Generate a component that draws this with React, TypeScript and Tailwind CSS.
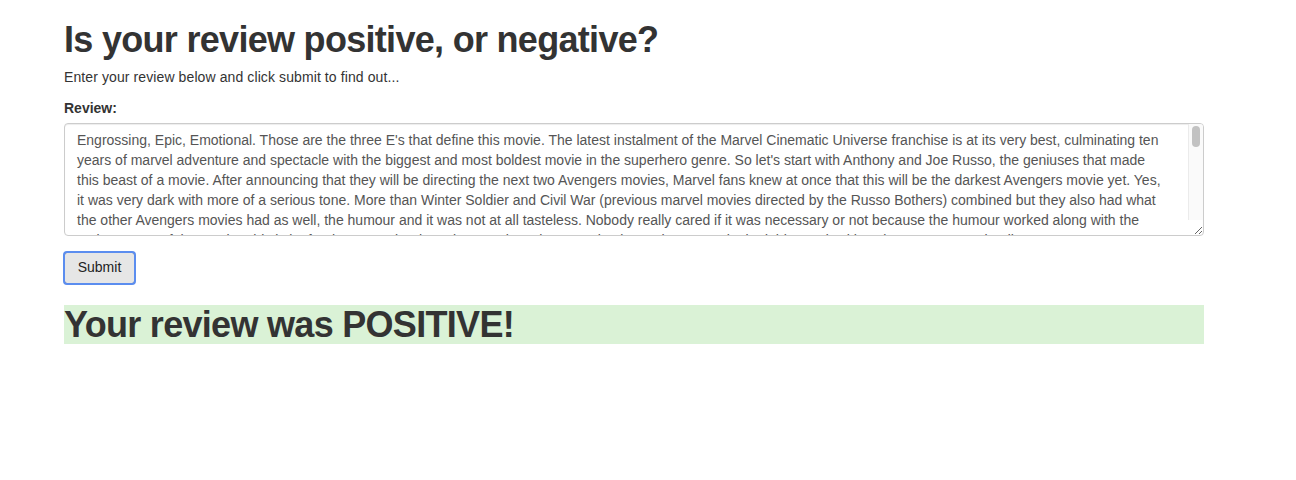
import React from "react";

const REVIEW = [
  "Engrossing, Epic, Emotional. Those are the three E's that define this movie. The latest instalment of the Marvel Cinematic Universe franchise is at its very best, culminating ten",
  "years of marvel adventure and spectacle with the biggest and most boldest movie in the superhero genre. So let's start with Anthony and Joe Russo, the geniuses that made",
  "this beast of a movie. After announcing that they will be directing the next two Avengers movies, Marvel fans knew at once that this will be the darkest Avengers movie yet. Yes,",
  "it was very dark with more of a serious tone. More than Winter Soldier and Civil War (previous marvel movies directed by the Russo Bothers) combined but they also had what",
  "the other Avengers movies had as well, the humour and it was not at all tasteless. Nobody really cared if it was necessary or not because the humour worked along with the",
  "serious parts of the movie. This is by far the Russo brothers' best work as the Marvel universe has never looked this good, with Robert Downey Jr. leading",
  "the cast once again, and every single hero getting a moment to shine. The action sequences are breathtaking and the stakes have never been higher.",
  "Thanos is the best villain Marvel has ever produced, a character with real motivation and depth. Josh Brolin delivers a performance that is both menacing",
  "and sympathetic, and the ending will leave you speechless.",
].join("\n");

export default function App() {
  return (
    <div
      className="min-h-[480px] bg-white text-[#333333]"
      style={{ fontFamily: '"Liberation Sans", Arial, sans-serif' }}
    >
      <div className="w-[1140px] ml-[64px]">
        <h1 className="mt-[20px] mb-[7px] text-[36px] leading-[39.6px] font-bold tracking-[-0.7px]">
          Is your review positive, or negative?
        </h1>
        <p className="text-[14px] leading-[20px] mb-[11px] tracking-[0.1px]">
          Enter your review below and click submit to find out...
        </p>
        <form className="flex flex-col">
          <label className="text-[14px] leading-[20px] font-bold mb-[5px]">Review:</label>
          <div className="relative">
            <textarea
              readOnly
              defaultValue={REVIEW}
              className="block w-full h-[113px] overflow-hidden border border-[#cccccc] rounded-[4px] pl-[12px] pr-[23px] py-[6px] text-[14px] leading-[20px] text-[#555555] bg-white outline-none shadow-[inset_0_1px_1px_rgba(0,0,0,0.075)]"
              style={{ fontFamily: '"Liberation Sans", Arial, sans-serif' }}
            />
            <div className="absolute right-[1px] top-[1px] w-[15px] h-[96px] bg-[#fafafa] border-l border-[#ebebeb] rounded-tr-[3px] flex justify-center pt-[2px]">
              <div className="w-[8px] h-[21px] rounded-full bg-[#c2c2c2]" />
            </div>
          </div>
          <div className="mt-[16px] flex">
            <button
              type="button"
              className="w-[71px] h-[32px] text-[14px] text-[#222222] bg-[#e6e6e6] border border-[#8a8a8a] rounded-[3px] outline-2 outline-[#5b8def] outline-offset-[-1px]"
              style={{ fontFamily: '"Liberation Sans", Arial, sans-serif' }}
            >
              Submit
            </button>
          </div>
        </form>
        <h1 className="mt-[21px] text-[36px] leading-[39px] font-bold tracking-[-0.7px] bg-[#daf2d6]">
          Your review was POSITIVE!
        </h1>
      </div>
    </div>
  );
}
